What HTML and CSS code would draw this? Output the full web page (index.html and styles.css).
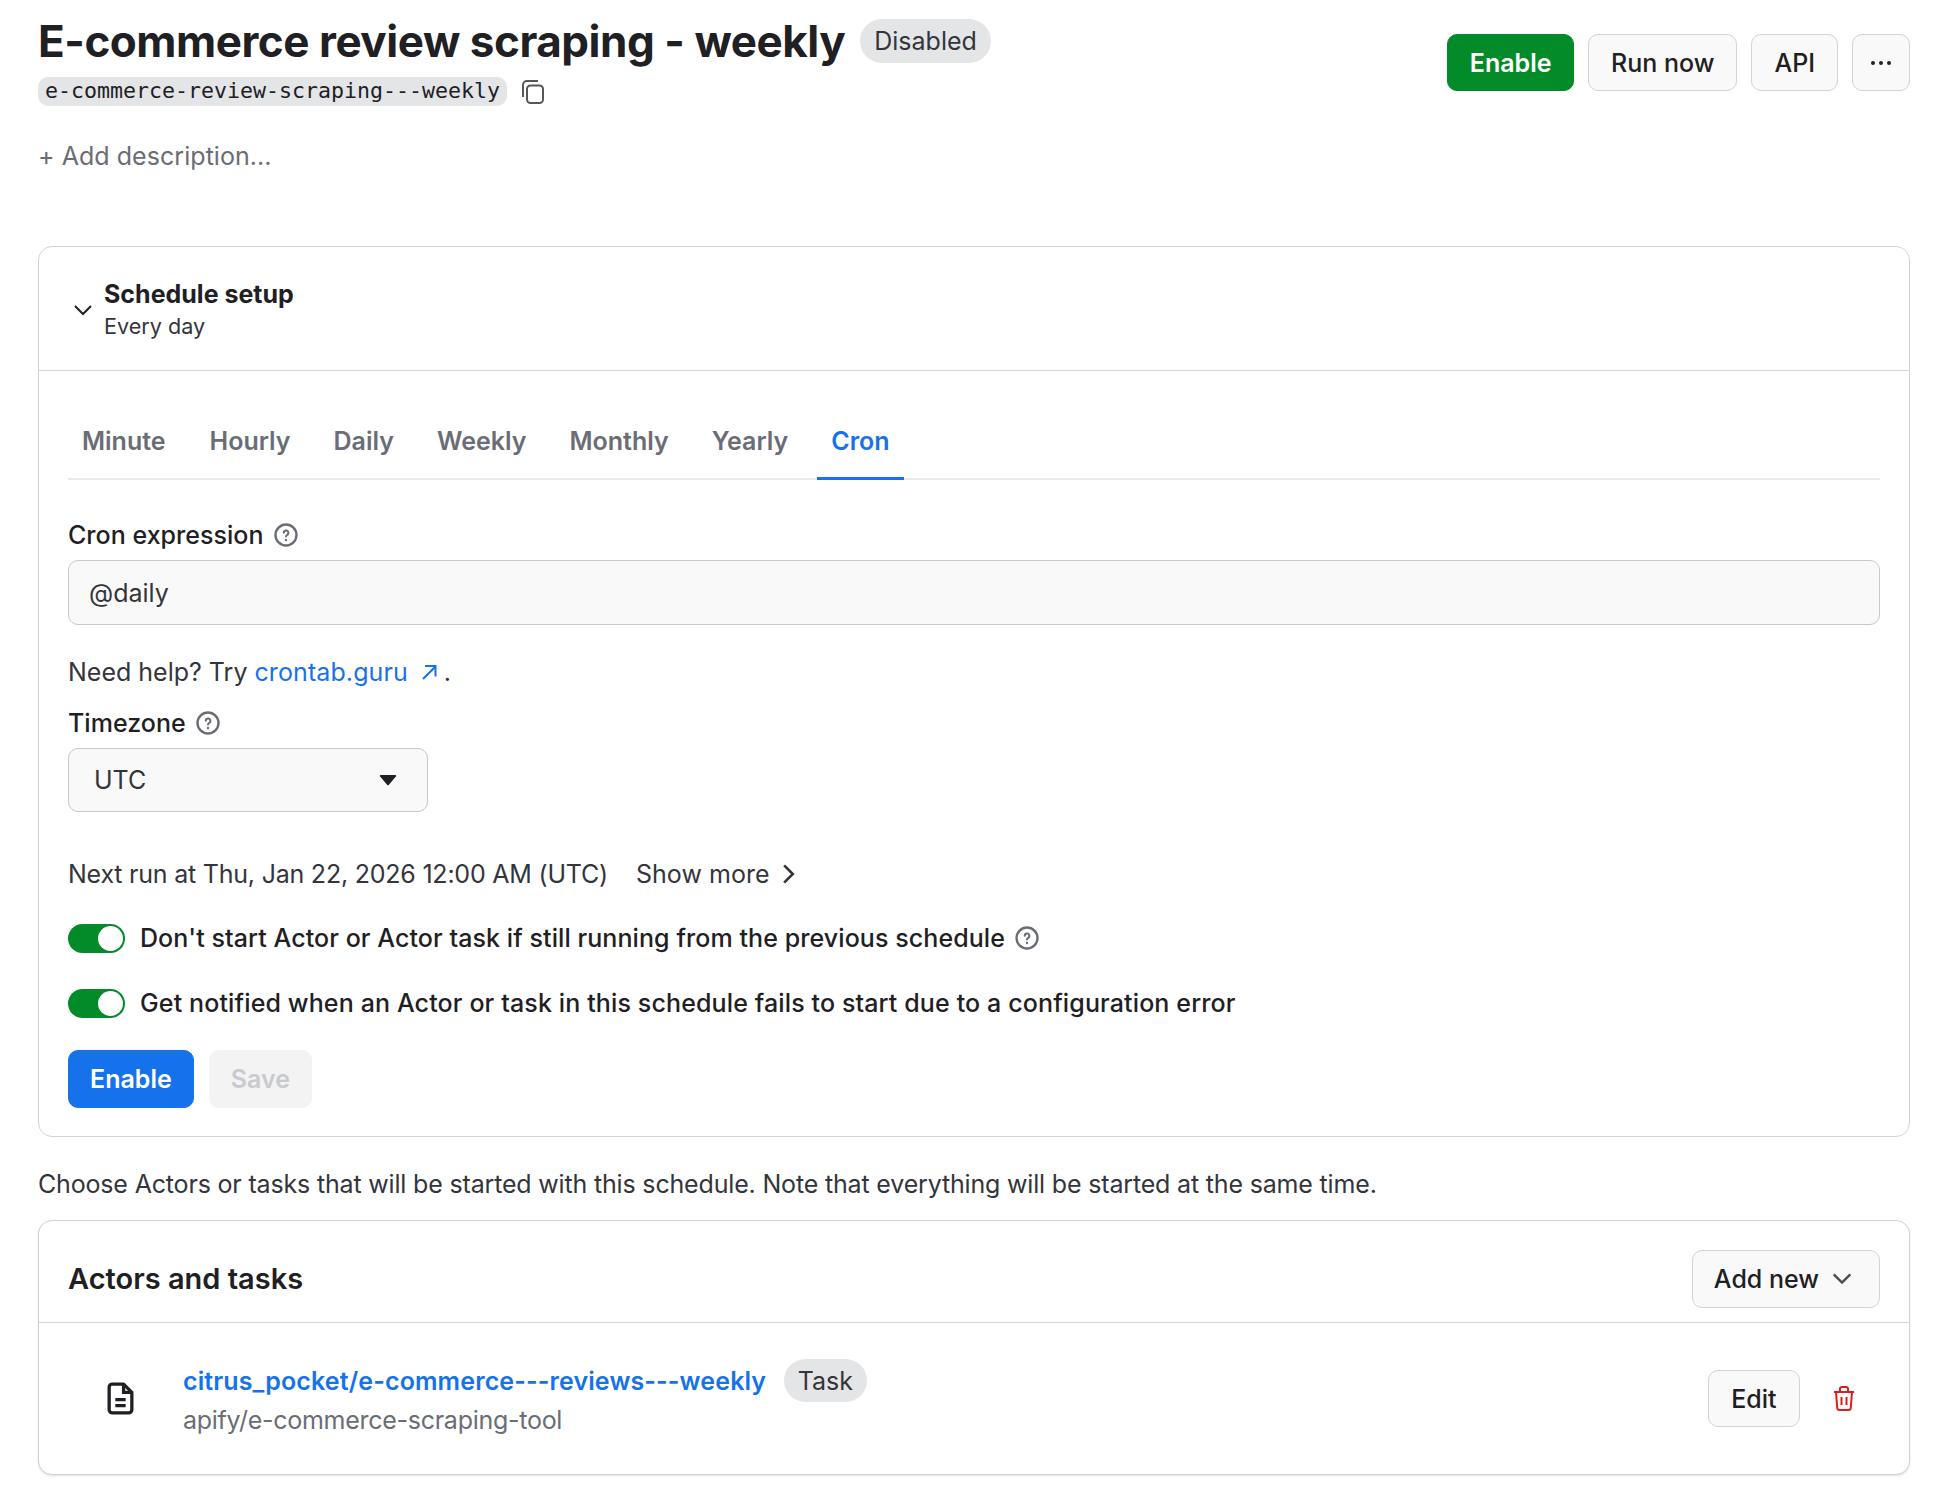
FILE: index.html
```html
<!DOCTYPE html>
<html lang="en">
<head>
<meta charset="utf-8">
<title>E-commerce review scraping - weekly</title>
<link rel="stylesheet" href="styles.css">
</head>
<body>
<div class="page">
  <header class="top">
    <div class="top-left">
      <div class="title-row">
        <h1 class="title">E-commerce review scraping - weekly</h1>
        <span class="pill pill-status">Disabled</span>
      </div>
      <div class="slug-row">
        <code class="slug">e-commerce-review-scraping---weekly</code>
        <svg class="copy-icon" viewBox="0 0 26 26" fill="none" stroke="#55575f" stroke-width="2"><rect x="7" y="6.5" width="16" height="17.5" rx="3.5"/><path d="M3 18V6a4 4 0 0 1 4-4h11"/></svg>
      </div>
      <div class="add-desc">+ Add description...</div>
    </div>
    <div class="top-actions">
      <button class="btn btn-green">Enable</button>
      <button class="btn">Run now</button>
      <button class="btn">API</button>
      <button class="btn btn-dots"><svg viewBox="0 0 22 6" width="22" height="6" fill="#1f2024"><circle cx="3" cy="3" r="2"/><circle cx="11" cy="3" r="2"/><circle cx="19" cy="3" r="2"/></svg></button>
    </div>
  </header>

  <section class="card card-schedule">
    <div class="sched-head">
      <svg class="chev-down" viewBox="0 0 20 12" fill="none" stroke="#1f2024" stroke-width="2"><path d="M2 2l8 8 8-8"/></svg>
      <div>
        <div class="sched-title">Schedule setup</div>
        <div class="sched-sub">Every day</div>
      </div>
    </div>
    <div class="sched-body">
      <nav class="tabs">
        <span class="tab">Minute</span>
        <span class="tab">Hourly</span>
        <span class="tab">Daily</span>
        <span class="tab">Weekly</span>
        <span class="tab">Monthly</span>
        <span class="tab">Yearly</span>
        <span class="tab tab-active">Cron</span>
      </nav>
      <label class="field-label field-cron">Cron expression
        <svg class="help" viewBox="0 0 24 24" fill="none" stroke="#6a6d76" stroke-width="2.400"><circle cx="12" cy="12" r="10.500"/><path d="M9.800 9.800a2.300 2.300 0 1 1 3.400 2c-.8.5-1.200.9-1.200 1.700" stroke-linecap="round" stroke-width="2"/><circle cx="12" cy="17" r=".5" stroke-width="1.400"/></svg>
      </label>
      <div class="input">@daily</div>
      <p class="help-line">Need help? Try <a class="link">crontab.guru</a><svg class="ext" viewBox="0 0 18 18" fill="none" stroke="#1672eb" stroke-width="2"><path d="M3 16L15 4M5 3h10.500v10.500"/></svg><span class="dot">.</span></p>
      <label class="field-label field-tz">Timezone
        <svg class="help" viewBox="0 0 24 24" fill="none" stroke="#6a6d76" stroke-width="2.400"><circle cx="12" cy="12" r="10.500"/><path d="M9.800 9.800a2.300 2.300 0 1 1 3.400 2c-.8.5-1.200.9-1.200 1.700" stroke-linecap="round" stroke-width="2"/><circle cx="12" cy="17" r=".5" stroke-width="1.400"/></svg>
      </label>
      <div class="select"><span>UTC</span><svg class="caret" viewBox="0 0 18 12" fill="#1f2024"><path d="M1.500 1h15a.8.8 0 0 1 .6 1.300L9.700 11a.9.9 0 0 1-1.400 0L.9 2.300A.8.8 0 0 1 1.500 1z"/></svg></div>
      <div class="next-run">
        <span class="next-text">Next run at Thu, Jan 22, 2026 12:00 AM (UTC)</span>
        <span class="show-more">Show more<svg class="chev-right" viewBox="0 0 12 20" fill="none" stroke="#33353b" stroke-width="2.400"><path d="M2 2l8 8-8 8"/></svg></span>
      </div>
      <div class="toggle-row">
        <span class="toggle"><span class="knob"></span></span>
        <span class="toggle-text toggle-text-1">Don't start Actor or Actor task if still running from the previous schedule</span>
        <svg class="help" viewBox="0 0 24 24" fill="none" stroke="#6a6d76" stroke-width="2.400"><circle cx="12" cy="12" r="10.500"/><path d="M9.800 9.800a2.300 2.300 0 1 1 3.400 2c-.8.5-1.200.9-1.200 1.700" stroke-linecap="round" stroke-width="2"/><circle cx="12" cy="17" r=".5" stroke-width="1.400"/></svg>
      </div>
      <div class="toggle-row toggle-row-2">
        <span class="toggle"><span class="knob"></span></span>
        <span class="toggle-text">Get notified when an Actor or task in this schedule fails to start due to a configuration error</span>
      </div>
      <div class="form-actions">
        <button class="btn btn-blue">Enable</button>
        <button class="btn btn-disabled">Save</button>
      </div>
    </div>
  </section>

  <p class="note">Choose Actors or tasks that will be started with this schedule. Note that everything will be started at the same time.</p>

  <section class="card card-actors">
    <div class="actors-head">
      <h2 class="actors-title">Actors and tasks</h2>
      <button class="btn btn-add">Add new<svg class="chev-small" viewBox="0 0 18 11" fill="none" stroke="#4b4d55" stroke-width="2"><path d="M2 2l7 7 7-7"/></svg></button>
    </div>
    <div class="actor-row">
      <svg class="file-icon" viewBox="0 0 26 32" fill="none" stroke="#1f2024" stroke-width="3.200"><path d="M5 2h11l8 8v17a3 3 0 0 1-3 3H5a3 3 0 0 1-3-3V5a3 3 0 0 1 3-3z" stroke-linejoin="round"/><path d="M16 2v8h8M8 17h10M8 23h10"/></svg>
      <div class="actor-info">
        <div class="actor-name-row">
          <a class="actor-name">citrus_pocket/e-commerce---reviews---weekly</a>
          <span class="pill pill-task">Task</span>
        </div>
        <div class="actor-sub">apify/e-commerce-scraping-tool</div>
      </div>
      <button class="btn btn-edit">Edit</button>
      <svg class="trash" viewBox="0 0 22 25" fill="none" stroke="#e01b1b" stroke-width="2"><path d="M1 6h20M7 6V3a2 2 0 0 1 2-2h4a2 2 0 0 1 2 2v3M3 6l1.200 15.500A2.500 2.500 0 0 0 6.700 24h8.600a2.500 2.500 0 0 0 2.500-2.500L19 6M8.500 11v8M13.500 11v8"/></svg>
    </div>
  </section>
</div>
</body>
</html>
```

FILE: styles.css
```css
* { box-sizing: border-box; }
html, body { margin: 0; padding: 0; background: #fff; }
body {
  font-family: Inter, "Liberation Sans", sans-serif;
  font-size: 25px;
  color: #1f2024;
}
.page { padding: 0 32px 23px 38px; width: 1942px; height: 1498px; overflow: hidden; }
.top { display: flex; justify-content: space-between; align-items: flex-start; height: 246px; }
.top-left { display: flex; flex-direction: column; }
.title-row { display: flex; align-items: center; gap: 15px; height: 44px; margin-top: 19px; }
.title { margin: 0; font-size: 44px; font-weight: 700; line-height: 44px; letter-spacing: -0.46px; }
.pill { background: #e4e5e7; border-radius: 22px; display: inline-flex; align-items: center; justify-content: center; }
.pill-status { height: 44px; padding: 0 14px; font-size: 25px; color: #33353b; }
.slug-row { display: flex; align-items: center; gap: 13px; margin-top: 14px; }
.slug { font-family: "DejaVu Sans Mono", "Liberation Mono", monospace; font-size: 21.600px; background: #e4e5e7; border-radius: 10px; padding: 0 7px; height: 29px; line-height: 27px; color: #1f2024; }
.copy-icon { width: 26px; height: 26px; }
.add-desc { margin-top: 34px; color: #6a6d76; font-size: 25px; line-height: 32px; letter-spacing: .05px; }
.top-actions { display: flex; gap: 14px; margin-top: 34px; }
.btn { font-family: inherit; font-size: 25px; font-weight: 500; height: 57px; padding: 0 22px; border: 1px solid #d2d3d8; background: #f9f9f9; border-radius: 10px; color: #1f2024; display: inline-flex; align-items: center; justify-content: center; }
.btn-green { background: #038a29; border-color: #038a29; color: #fff; font-weight: 600; padding: 0 21.500px; }
.btn-dots { width: 58px; padding: 0; }
.card { border: 1px solid #d2d3d8; border-radius: 14px; background: #fff; }
.card-schedule { height: 891px; }
.sched-head { display: flex; align-items: center; gap: 11px; height: 124px; padding: 2px 0 0 34px; border-bottom: 1px solid #d2d3d8; }
.chev-down { width: 20px; height: 12px; margin-top: 0; }
.sched-title { font-size: 25px; font-weight: 700; line-height: 32px; }
.sched-sub { font-size: 21.600px; line-height: 32px; color: #33353b; }
.sched-body { padding: 0 29px; }
.tabs { display: flex; height: 109px; align-items: flex-end; border-bottom: 2px solid #e8e9eb; gap: 15px; }
.tab { padding: 0 14px; height: 69px; line-height: 60px; font-weight: 600; color: #6a6d76; font-size: 25px; margin-bottom: -2px; }
.tab:first-child { padding-right: 15px; }
.tab-active { color: #1672eb; border-bottom: 3px solid #1672eb; }
.field-label { display: flex; align-items: center; gap: 10px; line-height: 32px; font-weight: 500; font-size: 25px; letter-spacing: .03px; }
.field-cron { margin-top: 39px; }
.help { width: 24px; height: 24px; flex: none; }
.input { margin-top: 9px; height: 65px; background: #f9f9f9; border: 1px solid #c7c8ce; border-radius: 10px; padding: 0 20px; display: flex; align-items: center; font-size: 25px; color: #33353b; }
.help-line { margin: 31px 0 0; line-height: 32px; color: #33353b; display: flex; align-items: center; }
.help-line .link { margin-left: 7px; letter-spacing: .1px; }
.link { color: #1672eb; }
.ext { width: 18px; height: 18px; margin-left: 12px; }
.dot { margin-left: 6px; }
.field-tz { margin-top: 19px; }
.select { margin-top: 9px; width: 360px; height: 64px; background: #f9f9f9; border: 1px solid #c7c8ce; border-radius: 10px; padding: 0 30px 0 25px; display: flex; align-items: center; justify-content: space-between; color: #33353b; }
.caret { width: 18px; height: 12px; }
.next-run { margin-top: 46px; display: flex; gap: 28px; line-height: 32px; color: #33353b; }
.next-text { letter-spacing: -.22px; }
.show-more { display: flex; align-items: center; gap: 12px; letter-spacing: .05px; }
.chev-right { width: 13px; height: 22px; }
.toggle-row { display: flex; align-items: center; margin-top: 32px; gap: 15px; line-height: 32px; font-weight: 500; height: 32px; }
.toggle-text { letter-spacing: .13px; }
.toggle-text-1 { letter-spacing: .08px; }
.toggle-row-2 { margin-top: 33px; }
.toggle-row .help { margin-left: -5px; }
.toggle { width: 57px; height: 29px; background: #038a29; border-radius: 15px; position: relative; flex: none; }
.knob { position: absolute; right: 2px; top: 2px; width: 25px; height: 25px; background: #fff; border-radius: 50%; }
.form-actions { display: flex; gap: 15px; margin-top: 31px; }
.form-actions .btn { height: 58px; padding: 0 21px; }
.btn-blue { background: #1672eb; border-color: #1672eb; color: #fff; font-weight: 600; }
.btn-disabled { background: #f3f3f4; border-color: #f3f3f4; color: #c9cacf; font-weight: 600; }
.note { margin: 31px 0 0; line-height: 32px; height: 32px; color: #33353b; letter-spacing: -.17px; }
.card-actors { margin-top: 20px; height: 255px; box-shadow: 0 1px 2px rgba(0,0,0,.12); }
.actors-head { display: flex; align-items: center; justify-content: space-between; height: 102px; padding: 14px 29px 0; border-bottom: 1px solid #d2d3d8; }
.actors-title { margin: 0; font-size: 29px; font-weight: 600; }
.btn-add { gap: 12px; padding: 0 26px 0 21px; height: 58px; }
.chev-small { width: 22px; height: 13px; }
.actor-row { display: flex; align-items: center; height: 151px; padding: 0 29px 0 68px; }
.file-icon { width: 27px; height: 33px; flex: none; margin-top: 0; }
.actor-info { margin-left: 49px; flex: 1; }
.actor-name-row { display: flex; align-items: center; gap: 18px; margin-top: -2px; }
.actor-name { color: #1672eb; font-weight: 600; font-size: 25px; letter-spacing: .12px; }
.pill-task { height: 43px; padding: 0 14px 0 13.500px; color: #33353b; }
.actor-sub { color: #6a6d76; line-height: 32px; margin-top: 2px; letter-spacing: -.27px; }
.btn-edit { height: 57px; padding: 0 22.500px; }
.trash { width: 22px; height: 25px; margin: 0 25px 0 33px; }
```
